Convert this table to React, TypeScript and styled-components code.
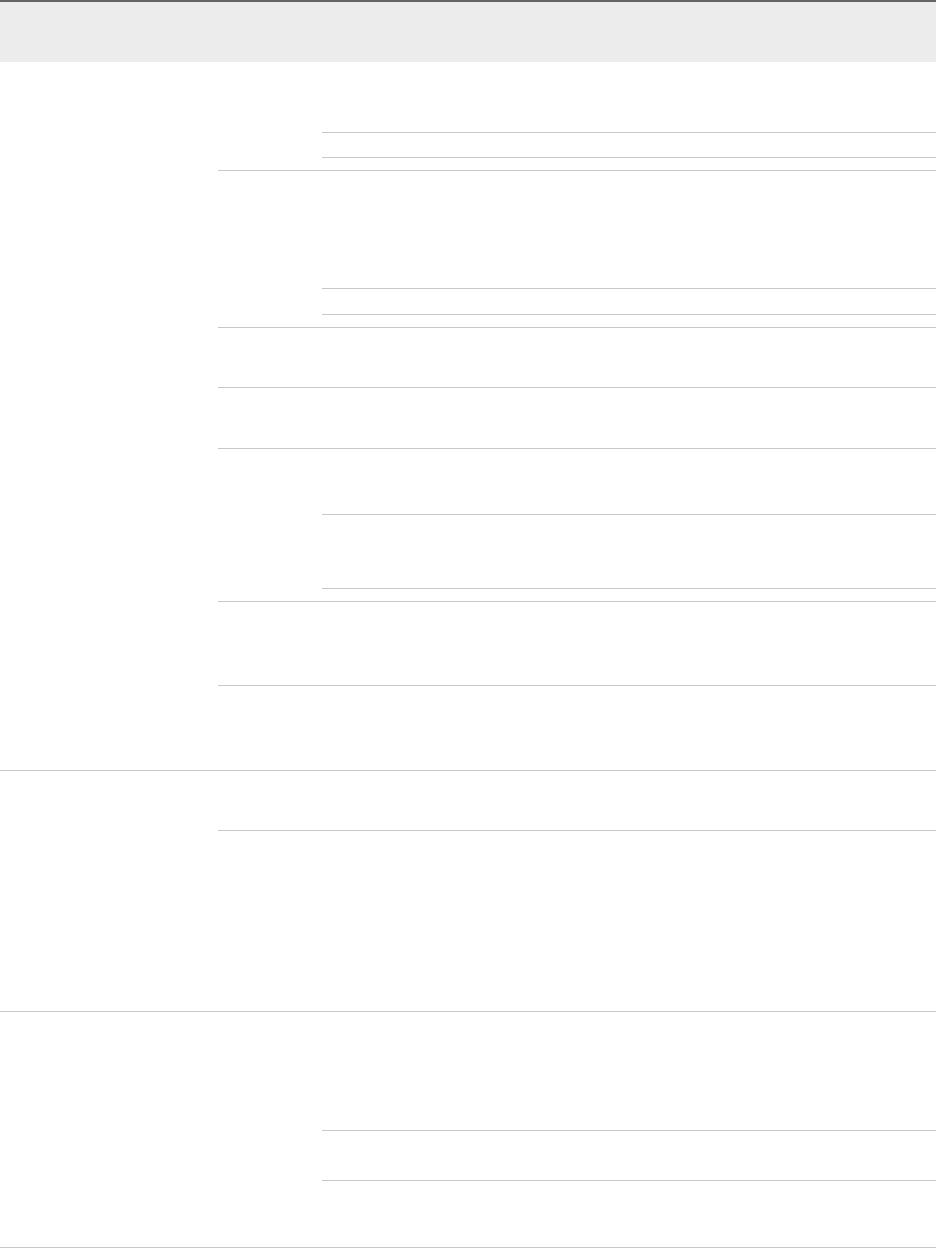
import React from "react";
import styled, { createGlobalStyle } from "styled-components";

const Global = createGlobalStyle`
  html, body { margin: 0; padding: 0; background: #ffffff; }
  body { font-family: "Liberation Sans", Arial, sans-serif; }
  * { box-sizing: border-box; }
`;

const Table = styled.div`
  width: 936px;
  display: flex;
  flex-direction: column;
  border-top: 2px solid #656565;
`;

const HeaderRow = styled.div`
  height: 60px;
  background: #ececec;
  display: grid;
  grid-template-columns: 218px 104px 1fr;
`;

const HeaderCell = styled.div``;

const Group = styled.div`
  display: flex;
  border-bottom: 1px solid #c8c8c8;
`;

const LeadCell = styled.div`
  width: 218px;
  flex: none;
`;

const SubList = styled.div`
  flex: 1;
  display: flex;
  flex-direction: column;
`;

const Sub = styled.div<{ $last?: boolean; $h?: number }>`
  display: flex;
  ${(p) => (p.$h ? `height: ${p.$h}px;` : "")}
  border-bottom: ${(p) => (p.$last ? "none" : "1px solid #c8c8c8")};
`;

const MidCell = styled.div`
  width: 104px;
  flex: none;
`;

const Stack = styled.div<{ $pad: number }>`
  flex: 1;
  display: flex;
  flex-direction: column;
  padding-bottom: ${(p) => p.$pad}px;
`;

const Line = styled.div<{ $h: number }>`
  height: ${(p) => p.$h}px;
  border-bottom: 1px solid #c8c8c8;
`;

type SubDef = { h?: number; rows?: number[]; pad?: number };
type GroupDef = { subs: SubDef[] };

const groups: GroupDef[] = [
  {
    subs: [
      { rows: [71, 25], pad: 12 },
      { rows: [118, 26], pad: 12 },
      { h: 60 },
      { h: 61 },
      { rows: [66, 74], pad: 12 },
      { h: 84 },
      { h: 84 },
    ],
  },
  {
    subs: [{ h: 60 }, { h: 180 }],
  },
  {
    subs: [{ rows: [119, 50], pad: 66 }],
  },
];

export default function App() {
  return (
    <>
      <Global />
      <Table>
        <HeaderRow>
          <HeaderCell />
          <HeaderCell />
          <HeaderCell />
        </HeaderRow>
        {groups.map((g, gi) => (
          <Group key={gi}>
            <LeadCell />
            <SubList>
              {g.subs.map((s, si) => {
                const last = si === g.subs.length - 1;
                const h = s.rows ? undefined : last ? s.h : (s.h as number);
                return (
                  <Sub key={si} $last={last} $h={h}>
                    <MidCell />
                    {s.rows ? (
                      <Stack $pad={s.pad ?? 0}>
                        {s.rows.map((r, ri) => (
                          <Line key={ri} $h={r} />
                        ))}
                      </Stack>
                    ) : (
                      <Stack $pad={0} />
                    )}
                  </Sub>
                );
              })}
            </SubList>
          </Group>
        ))}
      </Table>
    </>
  );
}
